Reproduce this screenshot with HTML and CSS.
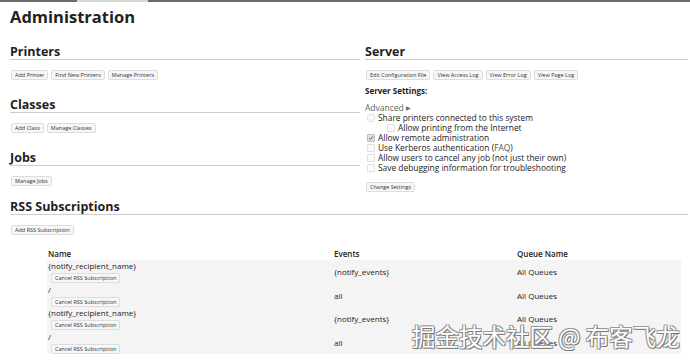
FILE: index.html
```html
<!DOCTYPE html>
<html lang="en">
<head>
    <meta charset="UTF-8">
    <title>Administration - CUPS</title>
    <link rel="stylesheet" href="styles.css">
</head>
<body>
    <div class="topbar"><div class="topbar-tab"></div></div>
    <div class="page">
        <h1>Administration</h1>
        <div class="columns">
            <div class="col">
                <h2>Printers</h2>
                <div class="buttons">
                    <button>Add Printer</button>
                    <button>Find New Printers</button>
                    <button>Manage Printers</button>
                </div>
                <h2>Classes</h2>
                <div class="buttons">
                    <button>Add Class</button>
                    <button>Manage Classes</button>
                </div>
                <h2>Jobs</h2>
                <div class="buttons">
                    <button>Manage Jobs</button>
                </div>
            </div>
            <div class="col">
                <h2>Server</h2>
                <div class="buttons">
                    <button>Edit Configuration File</button>
                    <button>View Access Log</button>
                    <button>View Error Log</button>
                    <button>View Page Log</button>
                </div>
                <h3>Server Settings:</h3>
                <div class="advanced">Advanced <span class="arrow">&#9654;</span></div>
                <ul class="settings">
                    <li><span class="box round"></span>Share printers connected to this system</li>
                    <li class="sub"><span class="box"></span>Allow printing from the Internet</li>
                    <li><span class="box checked"><svg viewBox="0 0 8 8"><path d="M1.5 4.2 L3.3 6 L6.6 1.8" fill="none" stroke="#555" stroke-width="1.3"/></svg></span>Allow remote administration</li>
                    <li><span class="box"></span>Use Kerberos authentication (<span class="link">FAQ</span>)</li>
                    <li><span class="box"></span>Allow users to cancel any job (not just their own)</li>
                    <li><span class="box"></span>Save debugging information for troubleshooting</li>
                </ul>
                <div class="buttons change">
                    <button>Change Settings</button>
                </div>
            </div>
        </div>
        <h2 class="wide">RSS Subscriptions</h2>
        <div class="buttons">
            <button>Add RSS Subscription</button>
        </div>
        <table class="subs">
            <thead>
                <tr>
                    <th class="c-name">Name</th>
                    <th class="c-events">Events</th>
                    <th>Queue Name</th>
                </tr>
            </thead>
            <tbody>
                <tr>
                    <td>{notify_recipient_name}<br><button>Cancel RSS Subscription</button></td>
                    <td>{notify_events}</td>
                    <td>All Queues</td>
                </tr>
                <tr>
                    <td>/<br><button>Cancel RSS Subscription</button></td>
                    <td>all</td>
                    <td>All Queues</td>
                </tr>
                <tr>
                    <td>{notify_recipient_name}<br><button>Cancel RSS Subscription</button></td>
                    <td>{notify_events}</td>
                    <td>All Queues</td>
                </tr>
                <tr>
                    <td>/<br><button>Cancel RSS Subscription</button></td>
                    <td>all</td>
                    <td>All Queues</td>
                </tr>
            </tbody>
        </table>
    </div>
    <div class="watermark">掘金技术社区 @ 布客飞龙</div>
</body>
</html>
```

FILE: styles.css
```css
body {
    margin: 0;
    font-family: "Open Sans", "DejaVu Sans", sans-serif;
    color: #222;
    background: #fff;
    width: 690px;
    height: 364px;
    overflow: hidden;
    position: relative;
}
.topbar {
    height: 2px;
    background-color: #6a6a6a;
}
.topbar-tab {
    margin-left: 77px;
    width: 71px;
    height: 2px;
    background-color: #d8d8d8;
}
.page {
    padding: 0 2px 0 10px;
}
h1 {
    margin: 0;
    padding-top: 4px;
    height: 21px;
    font-size: 16.5px;
    line-height: 22px;
    font-weight: bold;
}
h2 {
    margin: 16px 0 0;
    padding-top: 1px;
    height: 15px;
    font-size: 12.5px;
    line-height: 15px;
    font-weight: bold;
    border-bottom: 1px solid #ccc;
}
.columns {
    display: grid;
    grid-template-columns: 350px 1fr;
    column-gap: 5px;
}
.buttons {
    display: flex;
    gap: 3px;
    margin-top: 10px;
    padding-left: 1px;
}
button {
    font-family: inherit;
    font-size: 5.5px;
    height: 10px;
    line-height: 8px;
    padding: 0 3px;
    border: 1px solid #ddd;
    border-radius: 2px;
    background: #f7f7f7;
    color: #333;
}
h3 {
    margin: 5px 0 0;
    font-size: 8px;
    line-height: 12px;
    font-weight: bold;
}
.advanced {
    margin-top: 6px;
    font-size: 8.5px;
    line-height: 10px;
    color: #666;
}
.arrow {
    font-size: 6px;
    vertical-align: 1px;
}
.settings {
    list-style: none;
    margin: 0;
    padding: 0 0 0 2px;
    font-size: 8.4px;
    line-height: 10px;
}
.settings li {
    display: flex;
    align-items: center;
}
.settings li.sub {
    padding-left: 20px;
}
.box {
    width: 6px;
    height: 6px;
    margin-right: 3px;
    border: 1px solid #e0e0e0;
    border-radius: 1px;
    background: #fbfbfb;
}
.box.round {
    border-radius: 3px;
}
.box svg {
    display: block;
    width: 6px;
    height: 6px;
}
.box.checked {
    background: #e0e0e0;
    border-color: #bbb;
}
.link {
    color: #555;
}
.buttons.change {
    margin-top: 9px;
}
h2.wide {
    margin-top: 6px;
}
.subs {
    margin: 11px 0 0 37px;
    width: 634px;
    border-collapse: collapse;
    font-size: 8px;
}
.subs th {
    text-align: left;
    font-weight: 600;
    height: 14px;
    padding: 0 1px;
}
.subs .c-name {
    width: 284px;
}
.subs .c-events {
    width: 181px;
}
.subs td {
    background-color: #f4f4f4;
    height: 23.5px;
    padding: 0 1px;
    vertical-align: middle;
    line-height: 11px;
}
.subs td button {
    margin-left: 3px;
}
.watermark {
    position: absolute;
    left: 412px;
    top: 320px;
    font-family: "Noto Sans CJK SC", sans-serif;
    font-size: 23.5px;
    line-height: 32px;
    color: #fff;
    text-shadow: 1px 1px 0 #777, -1px -1px 0 #999, 1px -1px 0 #999, -1px 1px 0 #999;
}
```
